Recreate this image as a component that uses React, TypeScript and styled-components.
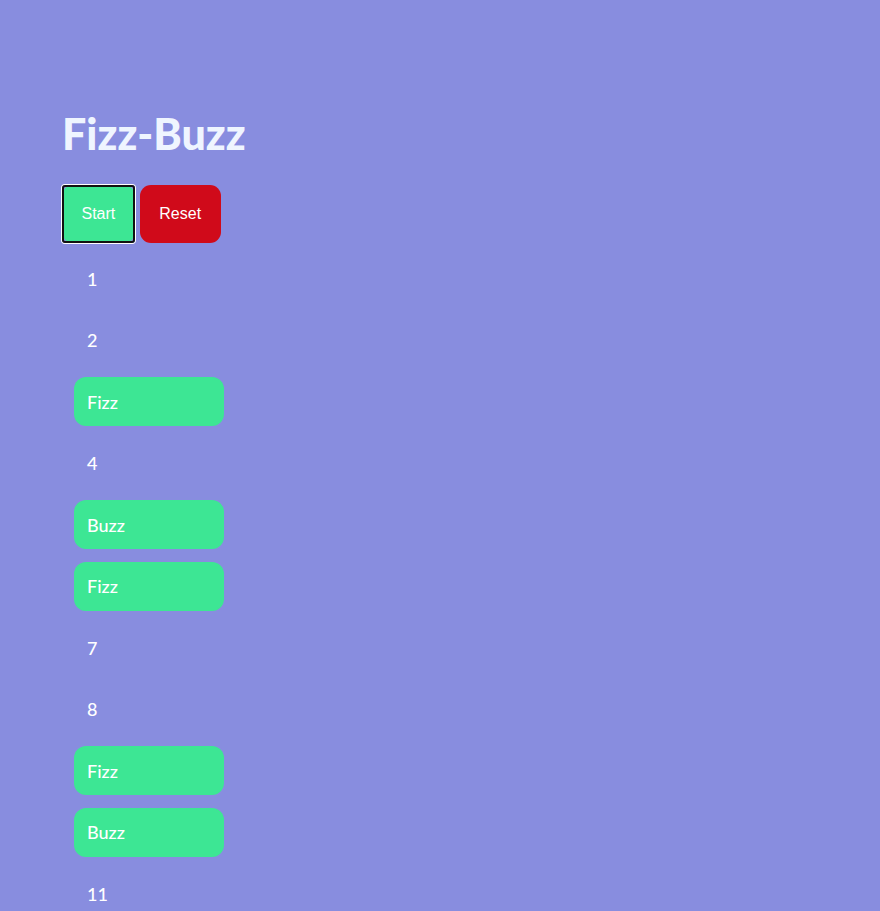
import styled, { createGlobalStyle } from 'styled-components';

const GlobalStyle = createGlobalStyle`
  html, body {
    margin: 0;
    padding: 0;
    background: #888ddf;
  }
`;

const Page = styled.main`
  height: 911px;
  padding: 103px 0 0 62px;
  box-sizing: border-box;
  background: #888ddf;
  overflow: hidden;
`;

const Title = styled.h1`
  margin: 3px 0 23px;
  font-family: 'Lato', 'Noto Sans', sans-serif;
  font-weight: 900;
  font-size: 43px;
  line-height: 56px;
  color: #eff5ff;
`;

const Controls = styled.div`
  display: flex;
  gap: 5px;
  margin-bottom: 11px;
`;

const Button = styled.button<{ $variant: 'start' | 'reset'; $focused?: boolean }>`
  position: relative;
  height: 58px;
  padding: 0 19.5px;
  border: none;
  border-radius: 11px;
  font-family: 'Liberation Sans', Arial, sans-serif;
  font-size: 16px;
  color: #ffffff;
  cursor: pointer;
  background: ${(props): string => (props.$variant === 'start' ? '#3de694' : '#d00a1a')};

  &::after {
    content: '';
    display: ${(props): string => (props.$focused ? 'block' : 'none')};
    position: absolute;
    inset: 0;
    border: 2px solid #111111;
    border-radius: 3px;
    box-shadow: 0 0 0 1px #ffffff;
  }
`;

const List = styled.ul`
  list-style: none;
  margin: 0;
  padding: 0 0 0 12px;
  display: flex;
  flex-direction: column;
  gap: 12.5px;
`;

const Item = styled.li<{ $hit: boolean }>`
  width: 150px;
  height: 49px;
  flex-shrink: 0;
  box-sizing: border-box;
  display: flex;
  align-items: center;
  padding: 0 13px;
  border-radius: 12px;
  font-family: 'Lato', 'Noto Sans', sans-serif;
  font-weight: 500;
  font-size: 18px;
  color: #ffffff;
  background: ${(props): string => (props.$hit ? '#3de694' : 'transparent')};
`;

const fizzBuzz = (n: number): string => {
  if (n % 15 === 0) return 'FizzBuzz';
  if (n % 3 === 0) return 'Fizz';
  if (n % 5 === 0) return 'Buzz';
  return String(n);
};

const App = (): JSX.Element => {
  const items = Array.from({ length: 12 }, (_, i) => fizzBuzz(i + 1));

  return (
    <>
      <GlobalStyle />
      <Page>
        <Title>Fizz-Buzz</Title>
        <Controls>
          <Button $variant="start" $focused>
            Start
          </Button>
          <Button $variant="reset">Reset</Button>
        </Controls>
        <List>
          {items.map((value, i) => (
            <Item key={i} $hit={isNaN(Number(value))}>
              {value}
            </Item>
          ))}
        </List>
      </Page>
    </>
  );
};

export default App;
